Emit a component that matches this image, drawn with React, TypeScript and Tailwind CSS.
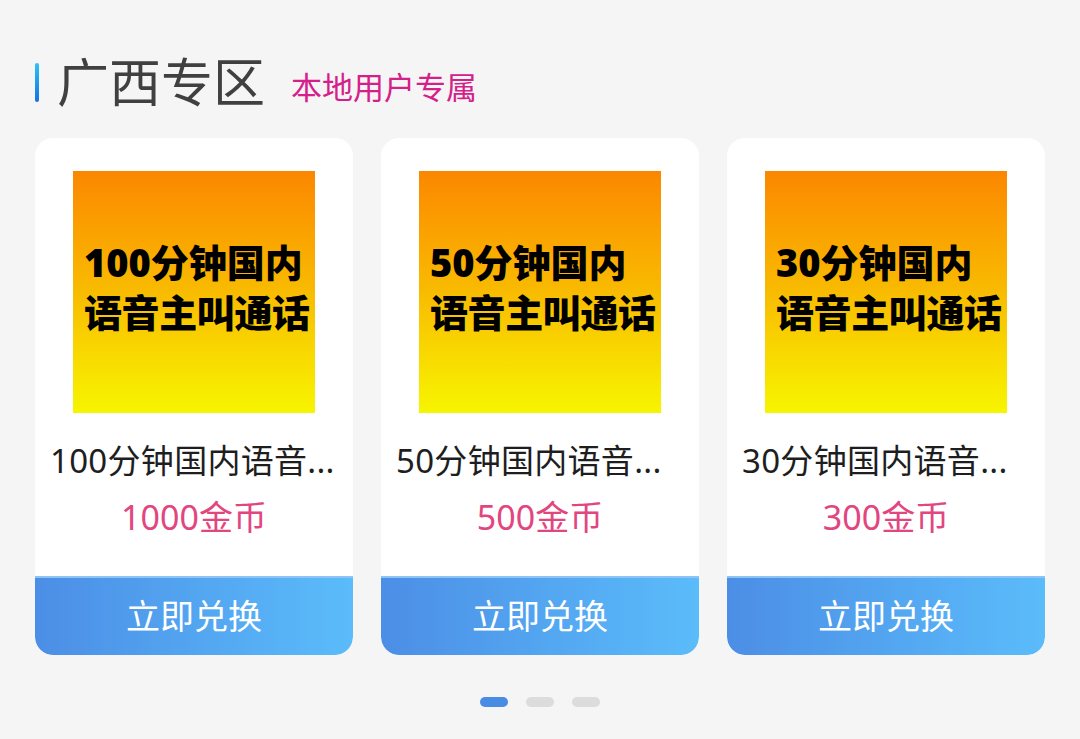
import React from "react";

type Item = {
  minutes: number;
  coins: number;
};

const ITEMS: Item[] = [
  { minutes: 100, coins: 1000 },
  { minutes: 50, coins: 500 },
  { minutes: 30, coins: 300 },
];

const FONT = "font-['Noto_Sans','Noto_Sans_CJK_SC',sans-serif]";

function Card({ item }: { item: Item }) {
  return (
    <div className="flex w-[318px] flex-col overflow-hidden rounded-[18px] bg-white">
      <div className="flex justify-center pt-[33px]">
        <div className="flex h-[242px] w-[242px] flex-col justify-center bg-gradient-to-b from-[#fb8700] via-[#f8bb00] to-[#f6f500] pb-[10px] pl-[11px]">
          <div className="whitespace-nowrap text-[38px] font-black leading-[50px] text-black">
            {item.minutes}分钟国内
          </div>
          <div className="whitespace-nowrap text-[38px] font-black leading-[50px] tracking-[-0.4px] text-black">
            语音主叫通话
          </div>
        </div>
      </div>
      <div className="mt-[28px] whitespace-nowrap px-[15px] text-[33px] leading-[40px] tracking-[0.3px] text-[#1e1e1e]">
        {item.minutes}分钟国内语音...
      </div>
      <div className="mt-[16px] text-center text-[34px] leading-[40px] text-[#e2467f]">
        {item.coins}金币
      </div>
      <button className="mt-[39px] h-[79px] rounded-b-[18px] border-t-2 border-[#8ec3f5] bg-gradient-to-r from-[#4c8ee6] to-[#5bbcfa] text-[34px] text-white">
        立即兑换
      </button>
    </div>
  );
}

export default function App() {
  return (
    <div className={`h-[739px] w-[1080px] overflow-hidden bg-[#f5f5f5] ${FONT}`}>
      <div className="flex items-center pl-[35px] pt-[52px]">
        <div className="h-[39px] w-[4px] rounded-full bg-gradient-to-b from-[#2fc3f3] to-[#1a6fe0]" />
        <div className="ml-[18px] text-[52px] leading-[60px] text-[#404040]">广西专区</div>
        <div className="ml-[26px] mt-[10px] text-[31px] leading-[40px] text-[#d4208a]">本地用户专属</div>
      </div>

      <div className="mt-[26px] flex gap-[28px] pl-[35px]">
        {ITEMS.map((it) => (
          <Card key={it.minutes} item={it} />
        ))}
      </div>

      <div className="mt-[42px] flex justify-center gap-[18px]">
        <div className="h-[10px] w-[28px] rounded-full bg-[#4a8be4]" />
        <div className="h-[10px] w-[28px] rounded-full bg-[#dcdcdc]" />
        <div className="h-[10px] w-[28px] rounded-full bg-[#dcdcdc]" />
      </div>
    </div>
  );
}
